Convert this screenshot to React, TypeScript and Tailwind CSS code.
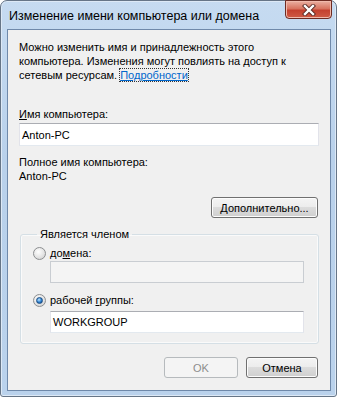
function Radio({ checked }: { checked?: boolean }) {
    return (
        <div className="w-[13px] h-[13px] rounded-full border border-[#8c8e90] bg-[radial-gradient(circle_at_40%_35%,#ffffff,#e4e4e4_55%,#c9c9c9)] flex items-center justify-center shrink-0">
            {checked && (
                <div className="w-[7px] h-[7px] rounded-full bg-[radial-gradient(circle_at_40%_35%,#bfe6ff,#2b7fcf_55%,#0c3d73)] border border-[#1c4e84]" />
            )}
        </div>
    );
}

function Button({ children, disabled, className }: { children: React.ReactNode; disabled?: boolean; className?: string }) {
    return (
        <div
            className={
                'h-[21px] rounded-[3px] border flex items-center justify-center ' +
                (disabled
                    ? 'border-[#b6babd] bg-[#f4f4f4] text-[#8d8d8d] '
                    : 'border-[#707070] bg-[linear-gradient(#f4f4f4,#ececec_49%,#dcdcdc_50%,#cfcfcf)] text-black shadow-[inset_0_0_0_1px_#fcfcfc] ') +
                (className ?? '')
            }
        >
            {children}
        </div>
    );
}

export default function App() {
    return (
        <div className="w-[337px] h-[397px] bg-white font-['Liberation_Sans',sans-serif] text-[11px] leading-[14px] text-black">
            <div className="w-full h-full rounded-t-[7px] rounded-b-[3px] border border-[#667587] bg-[linear-gradient(#c6dbf1,#b9d1eb_40%,#bad2ec)] shadow-[inset_0_0_0_1px_#dde9f6] flex flex-col">
                <div className="h-[28px] flex items-start shrink-0">
                    <div className="pl-[8px] pt-[8px] text-[12.5px] leading-[15px] text-black">
                        Изменение имени компьютера или домена
                    </div>
                    <div className="ml-auto mr-[4px] w-[47px] h-[19px] -mt-px rounded-b-[4px] border border-[#6e2b22] bg-[linear-gradient(#eab0a2,#d7735f_45%,#c4412f_55%,#cf5b45)] shadow-[inset_0_0_0_1px_#f0b9ab] flex items-center justify-center">
                        <svg width="16" height="12" viewBox="0 0 16 12">
                            <path d="M4 2 L12 10 M12 2 L4 10" stroke="#5a2a24" strokeWidth="4.2" strokeLinecap="square" />
                            <path d="M4 2 L12 10 M12 2 L4 10" stroke="#ffffff" strokeWidth="2.4" strokeLinecap="square" />
                        </svg>
                    </div>
                </div>
                <div className="flex-1 ml-[6px] mr-[5px] mb-[5px] border border-[#6f89aa] bg-[#f0f0f0] px-[11px] pt-[10px] flex flex-col">
                    <div>
                        <div>Можно изменить имя и принадлежность этого</div>
                        <div>компьютера. Изменения могут повлиять на доступ к</div>
                        <div>
                            сетевым ресурсам.{' '}
                            <span className="text-[#0066cc] underline outline outline-1 outline-dotted outline-[#333]">Подробности</span>
                        </div>
                    </div>
                    <div className="mt-[25px]">
                        <span className="underline">И</span>мя компьютера:
                    </div>
                    <div className="mt-[2px] h-[23px] bg-white border border-[#e2e3ea] border-t-[#abadb3] border-b-[#e3e9ef] flex items-center pl-[2px]">
                        Anton-PC
                    </div>
                    <div className="mt-[9px]">Полное имя компьютера:</div>
                    <div>Anton-PC</div>
                    <div className="mt-[14px] flex justify-end pr-[1px]">
                        <Button className="w-[107px]">
                            <span>
                                <span className="underline">Д</span>ополнительно...
                            </span>
                        </Button>
                    </div>
                    <fieldset className="mt-[9px] ml-[1px] border border-[#d5dfe5] rounded-[3px] pl-[12px] pr-[14px] pb-[10px] shadow-[inset_0_0_0_1px_#fafafa]">
                        <legend className="ml-[4px] px-[3px]">Является членом</legend>
                        <div className="mt-[5px] flex items-center gap-[4px]">
                            <Radio />
                            <span>
                                до<span className="underline">м</span>ена:
                            </span>
                        </div>
                        <div className="mt-px ml-[17px] h-[22px] border border-[#c9cdd2] bg-[#f4f4f4]" />
                        <div className="mt-[10px] flex items-center gap-[4px]">
                            <Radio checked />
                            <span>
                                рабочей <span className="underline">г</span>руппы:
                            </span>
                        </div>
                        <div className="mt-[4px] ml-[17px] h-[22px] bg-white border border-[#e2e3ea] border-t-[#abadb3] border-b-[#e3e9ef] flex items-center pl-[2px]">
                            WORKGROUP
                        </div>
                    </fieldset>
                    <div className="mt-[13px] flex justify-end gap-[8px] pr-[1px]">
                        <Button disabled className="w-[74px]">OK</Button>
                        <Button className="w-[72px]">Отмена</Button>
                    </div>
                </div>
            </div>
        </div>
    );
}
